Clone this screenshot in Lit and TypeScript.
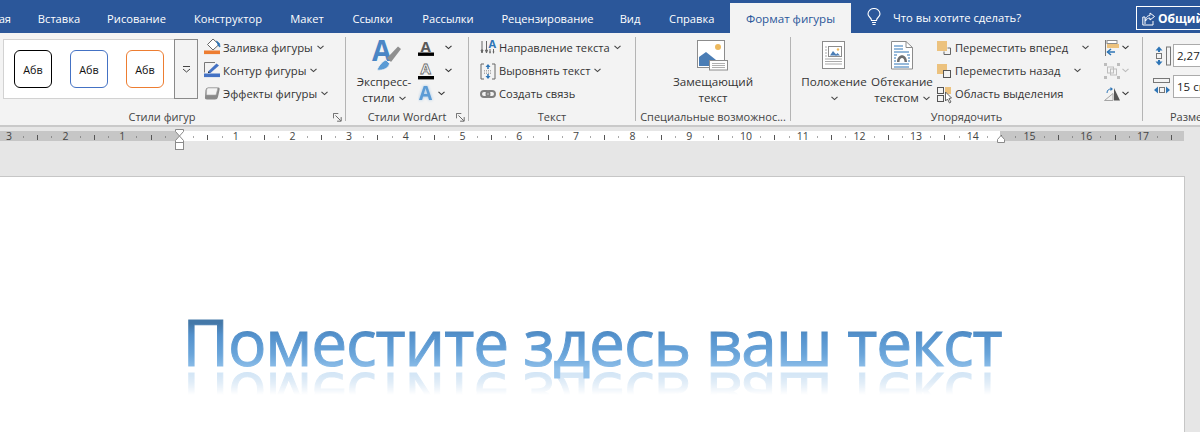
import { LitElement, html, css, svg } from "lit";
import { customElement } from "lit/decorators.js";

const chev = (c = "#444") => html`<svg class="chev" width="7" height="5" viewBox="0 0 7 5"><path d="M.5 .8 3.5 3.6 6.5 .8" fill="none" stroke="${c}" stroke-width="1.1"/></svg>`;

const ico = (w: number, h: number, body: unknown) =>
  html`<svg class="ico" width="${w}" height="${h}" viewBox="0 0 ${w} ${h}">${body}</svg>`;

const I = {
  fill: ico(17, 20, svg`<path d="M9 1 15 6.5 9 12 3.5 6.5Z" fill="#fff" stroke="#666"/><path d="M12.5 3 15.5 5.5 16 9 14.5 8Z" fill="#2e75b6" stroke="#2e75b6" stroke-width=".8"/><rect x="0" y="12.5" width="16" height="3.6" fill="#ed7d31"/>`),
  line: ico(17, 20, svg`<path d="M11 1.5H.5V11.5" fill="none" stroke="#777"/><path d="M4 10.5 12.5 2.5 15 4.5 6.5 12H4Z" fill="#4472c4"/><path d="M4 10.5V12H6Z" fill="#333"/><rect x="0" y="12.5" width="16" height="3.6" fill="#4472c4"/>`),
  effects: ico(17, 20, svg`<path d="M4 3.5H14.5Q16 3.5 15.6 5.5L14 13Q13.5 15.5 11 15.5H3Q.5 15.5 1 13L1.5 6Q2 3.5 4 3.5Z" fill="#8a8a8a"/><path d="M4 4H13Q14 4 13.4 6L12 11H2.5L2.6 6Q3 4 4 4Z" fill="#f4f4f4" stroke="#a5a5a5" stroke-width=".6"/>`),
  wordart: ico(45, 37, svg`<text x="10" y="24" class="bigA">A</text><path d="M25 21 36 9.500 39 12 29 25Z" fill="#8f8f8f"/><path d="M15 33C17 28 21 24 24 23L27.500 26.500C27 31 21 34 15 33Z" fill="#5a9bd5" stroke="#f3f3f3" stroke-width=".8"/>`),
  aFill: ico(17, 20, svg`<text x="2.5" y="14" class="smA" fill="#595959">A</text><rect x="0" y="14.5" width="16" height="3.4" fill="#000"/>`),
  aLine: ico(17, 20, svg`<text x="2.5" y="13" class="smA" fill="#fff" stroke="#6a6a6a" stroke-width=".8">A</text><rect x="0" y="15" width="16" height="3.4" fill="#000"/>`),
  aFx: ico(17, 20, svg`<text x="1" y="16" class="fxA glow" fill="#5b9bd5">A</text>`),
  direction: ico(17, 20, svg`<g stroke="#666" fill="#666" stroke-width="1"><path d="M2 3V14M6.500 3V14M1 12 2 15 3 12ZM5.500 12 6.500 15 7.500 12Z"/></g><text x="8.500" y="10" class="tA" fill="#2e75b6">A</text><path d="M10 11V15M13.500 11V15" stroke="#666"/><path d="M9 13.500 10 16 11 13.500ZM12.500 13.500 13.500 16 14.500 13.500Z" fill="#666"/>`),
  align: ico(17, 20, svg`<path d="M4 3H1V18H4M12 3H15V18H12" fill="none" stroke="#666"/><path d="M4 9.500H12M4 11H12M4 12.500H12" stroke="#aaa" stroke-dasharray="1 1"/><path d="M8 3 5.500 6H10.500ZM8 18 5.500 15H10.500Z" fill="#2e75b6"/><path d="M8 6V8M8 13V15" stroke="#2e75b6" stroke-width="1.500"/>`),
  link: ico(17, 20, svg`<rect x="1" y="7" width="8.500" height="6" rx="3" fill="none" stroke="#7f7f7f" stroke-width="2"/><rect x="6.500" y="7" width="8.500" height="6" rx="3" fill="none" stroke="#7f7f7f" stroke-width="2"/>`),
  alt: ico(32, 32, svg`<rect x=".5" y=".5" width="27" height="27" fill="#fff" stroke="#8c8c8c"/><circle cx="21" cy="7" r="3" fill="#edb95e"/><path d="M2 26V17L9 12 19 20H24V26Z" fill="#4a7db5"/><rect x="12.500" y="20.500" width="18" height="9.500" fill="#fff" stroke="#8c8c8c"/><path d="M15 23.500H28M15 25.500H28M15 27.500H28" stroke="#b0b0b0"/>`),
  position: ico(24, 29, svg`<rect x=".5" y=".5" width="22" height="27" fill="#fff" stroke="#8c8c8c"/><rect x="6.500" y="5.500" width="13" height="10" fill="#fff" stroke="#8c8c8c"/><path d="M8 14.500 11 10 15 14.500Z" fill="#4a7db5"/><path d="M13 14.500 15.500 12 18 14.500Z" fill="#4a7db5"/><circle cx="16" cy="8.500" r="1.200" fill="#edb95e"/><path d="M3 6H5M3 9H5M3 12H5M3 15H5M3 18H20M3 20.500H20M3 23H20" stroke="#a9a9a9"/>`),
  wrap: ico(22, 29, svg`<path d="M.5 .5H15L21.500 6.500V28H.5Z" fill="#fff" stroke="#8c8c8c"/><path d="M15 .5V6.500H21.500" fill="none" stroke="#8c8c8c"/><path d="M3 5H12M3 8H12M3 11H18M3 23H18M3 26H18" stroke="#2e75b6"/><path d="M3 14H6M16 14H19M3 17H5M17 17H19M3 20H5M17 20H19" stroke="#2e75b6"/><path d="M6 21C6 12 16 12 16 21H13.500C13.500 15.500 8.500 15.500 8.500 21Z" fill="#6f6f6f"/>`),
  forward: ico(15, 20, svg`<rect x="0" y="3" width="10" height="10" fill="#ecc27e"/><path d="M10.500 10H13.500V16.500H7V13.500" fill="none" stroke="#666"/>`),
  backward: ico(15, 20, svg`<rect x="0" y="3" width="10" height="10" fill="#ecc27e"/><rect x="6.500" y="9.500" width="7" height="7" fill="#f3f3f3" stroke="#555"/>`),
  select: ico(15, 20, svg`<rect x=".5" y="3.500" width="6" height="6" fill="none" stroke="#555"/><rect x=".5" y="11.500" width="6" height="6" fill="none" stroke="#555"/><rect x="8" y="3" width="6" height="7" fill="#ecc27e"/><path d="M8.500 8V17L10.500 15 12.500 19 14 18 12 14.500 14.500 14Z" fill="#fff" stroke="#555" stroke-width=".9"/>`),
  alignObj: ico(18, 20, svg`<path d="M1.500 2V18" stroke="#777"/><rect x="3" y="2.500" width="10" height="3" fill="#fff" stroke="#8c8c8c"/><rect x="3" y="6" width="12" height="4" fill="#ecc27e"/><path d="M3 14H11" stroke="#2e75b6" stroke-width="1.500"/><path d="M7 11 3.500 14 7 17" fill="none" stroke="#2e75b6" stroke-width="1.500"/>`),
  group: ico(18, 20, svg`<g fill="#bdbdbd"><rect x="0" y="2" width="3" height="3"/><rect x="13" y="2" width="3" height="3"/><rect x="0" y="15" width="3" height="3"/><rect x="13" y="15" width="3" height="3"/></g><rect x="3.500" y="6" width="6" height="6" fill="none" stroke="#bdbdbd"/><rect x="6.500" y="8" width="6" height="6" fill="none" stroke="#bdbdbd"/>`),
  rotate: ico(18, 20, svg`<path d="M.5 16.500 9 9.500V16.500Z" fill="#f0f0f0" stroke="#a5a5a5"/><path d="M10 4 16 16.500H10Z" fill="#555"/><path d="M3 9C3 6 5 5 7 5" fill="none" stroke="#2e75b6"/><path d="M6.500 3 9 5 6.500 7Z" fill="#2e75b6"/>`),
  height: ico(19, 24, svg`<path d="M6 2.500 2.500 6.500H9.500ZM6 21.500 2.500 17.500H9.500Z" fill="#2e75b6"/><path d="M6 6V8M6 16V18" stroke="#2e75b6" stroke-width="2"/><rect x="3.500" y="9.500" width="5" height="5" fill="none" stroke="#777"/><rect x="13.500" y="3" width="4" height="18" fill="none" stroke="#777"/>`),
  width: ico(19, 24, svg`<rect x=".5" y="3.500" width="16" height="4" fill="none" stroke="#777"/><path d="M1 15 5 11.500V18.500ZM17 15 13 11.500V18.500Z" fill="#2e75b6"/><rect x="6.500" y="12.500" width="5" height="5" fill="none" stroke="#777"/>`),
  launcher: html`<svg class="launch" width="9" height="9" viewBox="0 0 11 11"><path d="M.5 6.500V.5H6.500M10 10V5M10 10H5M3 3 9.500 9.500" fill="none" stroke="#666" stroke-width="1.200"/></svg>`,
  bulb: html`<svg class="bulb" width="14" height="18" viewBox="0 0 14 18"><path d="M4.500 12.500C4.500 9.500 1 9 1 6A6 5.500 0 0 1 13 6C13 9 9.500 9.500 9.500 12.500Z" fill="none" stroke="#fff" stroke-width="1.100"/><path d="M5 14.500H9M5.500 16.500H8.500" stroke="#fff" stroke-width="1.200"/></svg>`,
  share: html`<svg class="shareI" width="13" height="15" viewBox="0 0 13 15"><path d="M3 13V6H.8V14H11V10" fill="none" stroke="#fff"/><path d="M3.500 10C3.500 6 6 4.500 8 4.500V2L12.500 5.500 8 9V7C6 7 4.500 8 3.500 10Z" fill="none" stroke="#fff"/></svg>`,
};

const cm = 56.7;
const zero = 179;
function ruler() {
  const items: unknown[] = [];
  for (let i = -3.5; i <= 17.75; i += 0.25) {
    const x = zero + i * cm;
    const q = Math.round(i * 4);
    if (q === 0) continue;
    if (q % 4 === 0) {
      items.push(svg`<text x="${x}" y="13" class="rn">${Math.abs(i)}</text>`);
    } else if (q % 2 === 0) {
      items.push(svg`<rect x="${Math.round(x)}" y="8" width="1" height="5" fill="#555"/>`);
    } else {
      items.push(svg`<rect x="${Math.round(x)}" y="9.500" width="1" height="1" fill="#555"/>`);
    }
  }
  return html`<svg class="ruler" width="1184" height="24" viewBox="0 0 1184 24">
    <rect x="0" y="4" width="179" height="10" fill="#c6c6c6"/>
    <rect x="179" y="4" width="821" height="10" fill="#fff"/>
    <rect x="1000" y="4" width="184" height="10" fill="#c6c6c6"/>
    ${items}
    <path d="M175.500 2.500H183.500V4.500L179.500 9 183.500 13.500V15.500H175.500V13.500L179.500 9 175.500 4.500Z" fill="#fff" stroke="#8a8a8a"/>
    <rect x="175.500" y="15.500" width="8" height="7" fill="#fff" stroke="#8a8a8a"/>
    <path d="M997.500 15.500V12.500L1001 8.500 1004.500 12.500V15.500Z" fill="#fff" stroke="#8a8a8a"/>
  </svg>`;
}

const row = (icon: unknown, text: string, chevCls = "") =>
  html`<div class="row">${icon}<span>${text}</span>${chevCls === "none" ? "" : html`<span class="c ${chevCls}">${chev()}</span>`}</div>`;

@customElement("app-root")
export class AppRoot extends LitElement {
  static styles = css`
    :host { display: block; width: 1200px; height: 432px; overflow: hidden; background: #e6e6e6;
      font-family: "Open Sans", "Noto Sans", sans-serif; font-size: 11.150px; color: #333; }
    svg { display: block; flex: none; }
    .tabs { display: grid; height: 33px; background: #2b579a; color: #fff;
      grid-template-columns: 24.500px 69px 86px 97px 61px 70px 81px 118px 47px 76.500px 121px 285px 1fr; }
    .tab { display: flex; align-items: center; justify-content: center; padding-top: 4px; white-space: nowrap; }
    .tab.first { justify-content: flex-end; padding-right: 13.500px; }
    .tab.active { background: #f3f3f3; color: #2b579a; margin-top: 3px; padding-top: 1px; font-size: 11.600px; }
    .tell { display: flex; align-items: center; padding: 1px 0 0 16px; white-space: nowrap; font-size: 11.250px; }
    .bulb { margin-right: 12px; }
    .share { display: flex; align-items: center; gap: 3px; margin-top: 6px; height: 24px; box-sizing: border-box;
      border: 1.500px solid #fff; border-right: none; padding: 0 0 0 5px; font-weight: 700; font-size: 12px; white-space: nowrap; overflow: hidden; }

    .ribbon { display: grid; grid-template-columns: 346px 123px 167px 155px 352px 1fr;
      box-sizing: border-box; padding-top: 4px; background: #f3f3f3; border-bottom: 2px solid #c9c9c9; height: 94px; }
    .group { display: flex; flex-direction: column; height: 84px; border-right: 1px solid #b4b4b4; box-sizing: border-box; min-width: 0; }
    .group:last-child { border-right: none; }
    .body { display: flex; height: 73px; flex: none; box-sizing: border-box; }
    .label { height: 14px; line-height: 14px; display: flex; align-items: center; justify-content: center; position: relative;
      white-space: nowrap; color: #444; font-size: 11px; }
    .launch { position: absolute; right: 3px; top: 3px; }
    .l1 { padding-right: 21px; }

    .row { display: flex; align-items: center; height: 23px; white-space: nowrap; }
    .row .ico { margin-right: 2px; }
    .c { margin-left: 4px; }
    .c.wide { margin-left: 14px; }
    .col { display: flex; flex-direction: column; margin-top: -1px; }

    .gallery { display: flex; margin: 2px 0 0 3px; height: 60px; flex: none; box-sizing: border-box; width: 195px; }
    .swatches { display: flex; align-items: center; gap: 18px; width: 171px; padding-left: 10px; box-sizing: border-box; height: 60px;
      background: #fff; border: 1px solid #d2d2d2; border-right: none; }
    .sw { width: 38px; height: 38px; box-sizing: border-box; border-radius: 6px; border: 1px solid #000; background: #fff;
      display: flex; align-items: center; justify-content: center; font-size: 10.800px; color: #111; }
    .sw.blue { border-color: #4472c4; }
    .sw.orange { border-color: #ed7d31; }
    .more { width: 24px; height: 60px; box-sizing: border-box; border: 1px solid #8a8a8a; background: #f3f3f3;
      display: flex; align-items: center; justify-content: center; }
    .g1col { margin-left: 6px; font-size: 11.350px; }

    .big { display: flex; flex-direction: column; align-items: center; flex: none; font-size: 11.650px; }
    .bigIcon { height: 37px; display: flex; align-items: center; justify-content: center; }
    .big .t { height: 16px; line-height: 16px; display: flex; align-items: center; gap: 4px; white-space: nowrap; justify-content: center; }

    .g2 { padding-left: 7px; }
    .g2 .big { width: 62px; }
    .g2 .col { margin-left: 3px; }
    .g2 .row .ico { margin-right: 0; }
    .g2 .c { margin-left: 10px; }
    .g2 .c.near { margin-left: 3px; }
    .g3 { padding-left: 11px; }
    .g4 { justify-content: center; }
    .g5 .pos { width: 70px; margin-left: 8px; }
    .g5 .wrapb { width: 66px; }
    .g5 .moves { margin-left: 2px; width: 167px; }
    .g5 .moves .ico { margin-right: 3px; }
    .g5 .mini .ico { margin-right: 0; }
    .g5 .mini .c { margin-left: 0; }
    .g6 { padding: 7px 0 0 10px; flex-direction: column; gap: 8px; }
    .sz { display: flex; align-items: center; gap: 1px; height: 23px; }
    .inp { width: 40px; height: 23px; box-sizing: border-box; background: #fff; border: 1px solid #ababab; border-right: none; padding-left: 3px;
      display: flex; align-items: center; white-space: nowrap; color: #222; font-size: 11.500px; }
    .l6 { justify-content: flex-start; padding-left: 27px; }

    .bigA { font: 700 28px "Open Sans", sans-serif; fill: #4a86c5; }
    .smA { font: 700 15px "Open Sans", sans-serif; }
    .fxA { font: 700 19px "Open Sans", sans-serif; }
    .tA { font: 700 11px "Open Sans", sans-serif; }
    .glow { filter: drop-shadow(0 0 1.500px #9cc3e6); }

    .gutter { height: 49px; background: #e6e6e6; }
    .rn { font: 10.500px "Open Sans", sans-serif; fill: #444; text-anchor: middle; }

    .page { width: 1185px; height: 256px; box-sizing: border-box; background: #fff; border-top: 1px solid #c6c6c6; border-right: 1px solid #c6c6c6;
      display: flex; justify-content: center; padding-top: 133px; }
    .art { font: 500 64px/1 "Open Sans", sans-serif; letter-spacing: -1.100px; height: 74px; white-space: nowrap; color: transparent;
      -webkit-text-stroke: 1px transparent;
      background: linear-gradient(180deg, #4478a8 18%, #5391cc 34%, #6aa5da 60%, #90c0ea 80%);
      -webkit-background-clip: text; background-clip: text;
      -webkit-box-reflect: below -29px linear-gradient(transparent 46%, rgba(255,255,255,.42) 80%); }
  `;

  render() {
    const tabs = ["Вставка", "Рисование", "Конструктор", "Макет", "Ссылки", "Рассылки", "Рецензирование", "Вид", "Справка"];
    return html`
      <div class="tabs">
        <div class="tab first">Главная</div>
        ${tabs.map((t) => html`<div class="tab">${t}</div>`)}
        <div class="tab active">Формат фигуры</div>
        <div class="tell">${I.bulb}Что вы хотите сделать?</div>
        <div class="share">${I.share}Общий доступ</div>
      </div>
      <div class="ribbon">
        <section class="group">
          <div class="body">
            <div class="gallery">
              <div class="swatches">
                <div class="sw">Абв</div><div class="sw blue">Абв</div><div class="sw orange">Абв</div>
              </div>
              <div class="more"><svg width="9" height="8" viewBox="0 0 9 8"><path d="M1 1.500H8M1 4 4.500 7 8 4" fill="none" stroke="#444"/></svg></div>
            </div>
            <div class="col g1col">
              ${row(I.fill, "Заливка фигуры")}
              ${row(I.line, "Контур фигуры")}
              ${row(I.effects, "Эффекты фигуры")}
            </div>
          </div>
          <div class="label"><span class="l1">Стили фигур</span>${I.launcher}</div>
        </section>
        <section class="group">
          <div class="body g2">
            <div class="big">
              <div class="bigIcon">${I.wordart}</div>
              <div class="t">Экспресс-</div>
              <div class="t">стили ${chev()}</div>
            </div>
            <div class="col">
              <div class="row">${I.aFill}<span class="c">${chev("#333")}</span></div>
              <div class="row">${I.aLine}<span class="c">${chev("#333")}</span></div>
              <div class="row">${I.aFx}<span class="c near">${chev("#333")}</span></div>
            </div>
          </div>
          <div class="label"><span>Стили WordArt</span>${I.launcher}</div>
        </section>
        <section class="group">
          <div class="body g3">
            <div class="col">
              ${row(I.direction, "Направление текста")}
              ${row(I.align, "Выровнять текст")}
              ${row(I.link, "Создать связь", "none")}
            </div>
          </div>
          <div class="label">Текст</div>
        </section>
        <section class="group">
          <div class="body g4">
            <div class="big">
              <div class="bigIcon">${I.alt}</div>
              <div class="t">Замещающий</div>
              <div class="t">текст</div>
            </div>
          </div>
          <div class="label">Специальные возможнос...</div>
        </section>
        <section class="group">
          <div class="body g5">
            <div class="big pos">
              <div class="bigIcon">${I.position}</div>
              <div class="t">Положение</div>
              <div class="t">${chev()}</div>
            </div>
            <div class="big wrapb">
              <div class="bigIcon">${I.wrap}</div>
              <div class="t">Обтекание</div>
              <div class="t">текстом ${chev()}</div>
            </div>
            <div class="col moves">
              ${row(I.forward, "Переместить вперед", "wide")}
              ${row(I.backward, "Переместить назад", "wide")}
              ${row(I.select, "Область выделения", "none")}
            </div>
            <div class="col mini">
              <div class="row">${I.alignObj}<span class="c">${chev("#333")}</span></div>
              <div class="row">${I.group}<span class="c">${chev("#bbb")}</span></div>
              <div class="row">${I.rotate}<span class="c">${chev("#333")}</span></div>
            </div>
          </div>
          <div class="label">Упорядочить</div>
        </section>
        <section class="group">
          <div class="body g6">
            <div class="sz">${I.height}<div class="inp">2,27 см</div></div>
            <div class="sz">${I.width}<div class="inp">15 см</div></div>
          </div>
          <div class="label l6">Размер</div>
        </section>
      </div>
      <div class="gutter">${ruler()}</div>
      <div class="page"><div class="art">Поместите здесь ваш текст</div></div>
    `;
  }
}
